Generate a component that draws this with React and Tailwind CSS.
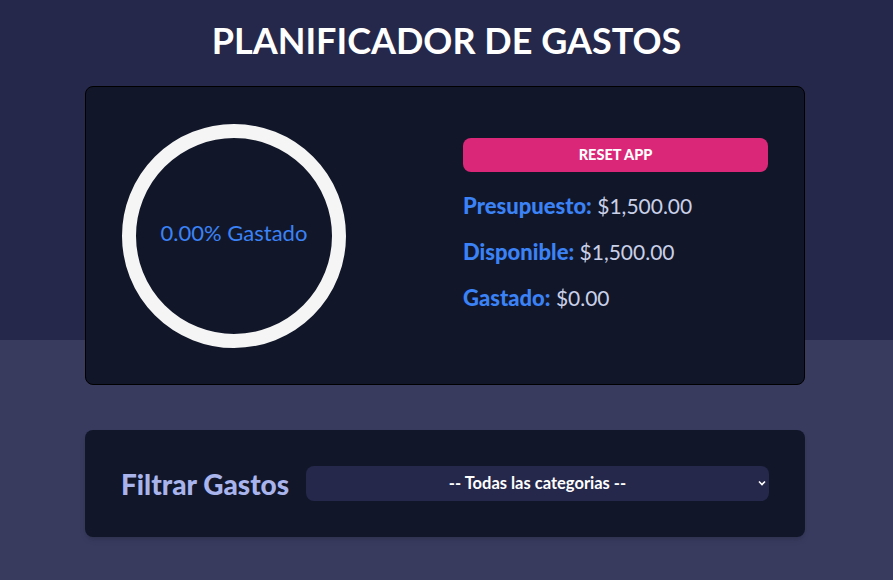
export default function App() {
  return (
    <div className="min-h-[580px] bg-[#383b5e] font-['Lato','Liberation_Sans',sans-serif]">
      <div className="h-[340px] bg-[#25284a]">
        <h1 className="pt-[17px] text-center text-[36px] font-bold leading-[46px] text-white">PLANIFICADOR DE GASTOS</h1>

        <div className="ml-[85px] mt-[23px] flex h-[299px] w-[720px] items-center rounded-lg border border-black bg-[#111729] px-[36px]">
          <div className="relative h-[224px] w-[224px] shrink-0">
            <svg width="224" height="224" viewBox="0 0 224 224" className="absolute inset-0">
              <circle cx="112" cy="112" r="105" fill="none" stroke="#f5f5f5" strokeWidth="14" />
            </svg>
            <div className="absolute inset-0 flex items-center justify-center pb-[6px] text-[22px] text-[#3b82f6]">0.00% Gastado</div>
          </div>

          <div className="ml-auto flex w-[305px] flex-col self-start pt-[51px]">
            <button className="h-[34px] w-full rounded-lg bg-[#db2777] text-[14.5px] font-black text-white">RESET APP</button>
            <p className="mt-[20px] text-[21px] leading-[28px] text-[#c9d0e8]">
              <span className="text-[22px] font-black text-[#3b82f6]">Presupuesto:</span> $1,500.00
            </p>
            <p className="mt-[18px] text-[21px] leading-[28px] text-[#c9d0e8]">
              <span className="text-[22px] font-black text-[#3b82f6]">Disponible:</span> $1,500.00
            </p>
            <p className="mt-[18px] text-[21px] leading-[28px] text-[#c9d0e8]">
              <span className="text-[22px] font-black text-[#3b82f6]">Gastado:</span> $0.00
            </p>
          </div>
        </div>
      </div>

      <div className="ml-[85px] mt-[90px] flex h-[107px] w-[720px] items-center rounded-lg bg-[#111729] pl-[36px] pr-[36px] shadow-md">
        <span className="whitespace-nowrap text-[28px] font-black text-[#a9b4ec]">Filtrar Gastos</span>
        <div className="relative ml-auto flex h-[35px] w-[463px] items-center justify-center rounded-lg bg-[#25284a] text-[16.5px] font-bold text-white">
          -- Todas las categorias --
          <svg className="absolute right-[3px] top-[13px]" width="8" height="8" viewBox="0 0 8 8">
            <path d="M1 2.5 L4 5.5 L7 2.5" fill="none" stroke="white" strokeWidth="1.6" />
          </svg>
        </div>
      </div>
    </div>
  );
}
